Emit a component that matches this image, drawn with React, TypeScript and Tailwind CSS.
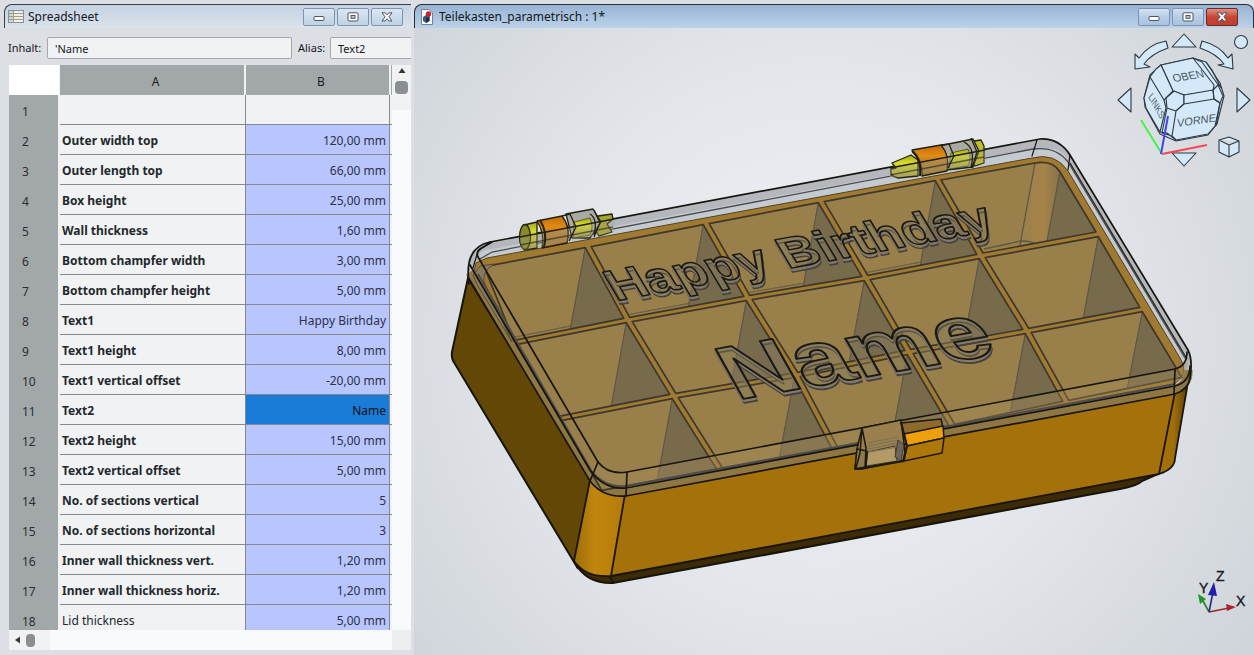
import React from "react";

type Row = { label: string; value: string; bold?: boolean; selected?: boolean };

const rows: Row[] = [
  { label: "", value: "" },
  { label: "Outer width top", value: "120,00 mm", bold: true },
  { label: "Outer length top", value: "66,00 mm", bold: true },
  { label: "Box height", value: "25,00 mm", bold: true },
  { label: "Wall thickness", value: "1,60 mm", bold: true },
  { label: "Bottom champfer width", value: "3,00 mm", bold: true },
  { label: "Bottom champfer height", value: "5,00 mm", bold: true },
  { label: "Text1", value: "Happy Birthday", bold: true },
  { label: "Text1 height", value: "8,00 mm", bold: true },
  { label: "Text1 vertical offset", value: "-20,00 mm", bold: true },
  { label: "Text2", value: "Name", bold: true, selected: true },
  { label: "Text2 height", value: "15,00 mm", bold: true },
  { label: "Text2 vertical offset", value: "5,00 mm", bold: true },
  { label: "No. of sections vertical", value: "5", bold: true },
  { label: "No. of sections horizontal", value: "3", bold: true },
  { label: "Inner wall thickness vert.", value: "1,20 mm", bold: true },
  { label: "Inner wall thickness horiz.", value: "1,20 mm", bold: true },
  { label: "Lid thickness", value: "5,00 mm" },
];

function WindowButtons({ active = false }: { active?: boolean }) {
  const base =
    "flex h-[18px] w-8 items-center justify-center rounded-xs border bg-linear-to-b";
  const tone = active
    ? "border-[#7f93b0] from-[#d3e1f1] via-[#b7cde6] to-[#a9c3e0]"
    : "border-[#7f93b0] from-[#dbe6f1] to-[#c0d2e5]";
  const closeTone = active
    ? "border-[#6b2a2a] from-[#dd8f84] via-[#c8452f] to-[#c2402c]"
    : tone;
  const ink = "#4a5565";
  return (
    <div className="flex gap-0.5">
      <button type="button" aria-label="Minimize" className={`${base} ${tone}`}>
        <svg width="12" height="10" viewBox="0 0 12 10">
          <rect x="1" y="4.5" width="10" height="4" rx="1" fill="#fff" stroke={ink} />
        </svg>
      </button>
      <button type="button" aria-label="Maximize" className={`${base} ${tone}`}>
        <svg width="12" height="10" viewBox="0 0 12 10">
          <rect x="1" y="0.8" width="10" height="8.2" rx="1" fill="#fff" stroke={ink} />
          <rect x="4" y="3.5" width="4" height="2.8" fill="#b9cbe0" stroke={ink} />
        </svg>
      </button>
      <button type="button" aria-label="Close" className={`${base} ${closeTone}`}>
        <svg width="12" height="10" viewBox="0 0 12 10">
          <path
            d="M1 0.8H4.2L6 2.9L7.8 0.8H11L7.9 4.8L11 9H7.8L6 6.8L4.2 9H1L4.1 4.8Z"
            fill="#fff"
            stroke={ink}
            strokeLinejoin="round"
          />
        </svg>
      </button>
    </div>
  );
}

function SheetIcon() {
  return (
    <svg width="16" height="13" viewBox="0 0 16 13">
      <rect x="0.5" y="0.5" width="15" height="12" fill="#eef0e6" stroke="#8b9299" />
      <rect x="1" y="1" width="4" height="11" fill="#d3d6cf" />
      <path d="M5.5 1V12M1 3.5H15M1 6.5H15M1 9.5H15" stroke="#9aa18f" />
    </svg>
  );
}

function DocumentIcon() {
  return (
    <svg width="12" height="16" viewBox="0 0 12 16">
      <path d="M0.5 0.5H8L11.5 4V15.5H0.5Z" fill="#fff" stroke="#76818f" />
      <path d="M2 8L5 6L8.5 7.5V12L5 14L2 12Z" fill="#3d5580" />
      <circle cx="7.5" cy="5" r="2.7" fill="#c32432" />
      <path d="M5 9L8.5 7.5V12L5 14Z" fill="#1f2f4e" />
    </svg>
  );
}

function SpreadsheetWindow() {
  return (
    <section className="flex w-[411px] flex-none flex-col overflow-hidden bg-[#dcdfe3]">
      <header className="mt-1 ml-1 flex h-6 flex-none items-center rounded-tl-lg border-t border-l border-[#3a4047] bg-linear-to-b from-[#c3d2e2] to-[#dbe3ec] pr-2 pl-[3px]">
        <SheetIcon />
        <h1 className="ml-1 flex-1 text-xs text-[#14181d]">Spreadsheet</h1>
        <WindowButtons />
      </header>
      <div className="flex h-10 flex-none items-center overflow-hidden pl-2 text-[11px] text-[#15181c]">
        <label htmlFor="content" className="w-[39px] flex-none">
          Inhalt:
        </label>
        <input
          id="content"
          defaultValue="'Name"
          className="h-[22px] w-[245px] flex-none rounded-xs border border-[#a5a9ad] bg-[#f0f2f4] px-[7px]"
        />
        <label htmlFor="alias" className="ml-[6px] w-[32px] flex-none">
          Alias:
        </label>
        <input
          id="alias"
          defaultValue="Text2"
          className="h-[22px] w-[120px] flex-none rounded-xs border border-[#a5a9ad] bg-[#f0f2f4] px-[7px]"
        />
      </div>
      <div className="mt-[-3px] mb-[5px] ml-[9px] flex min-h-0 flex-1 flex-col">
        <div className="flex min-h-0 flex-1">
          <div className="w-[383px] flex-none overflow-hidden bg-[#f0f2f4]">
            <table className="w-full table-fixed border-separate border-spacing-0 text-xs">
              <colgroup>
                <col className="w-[51px]" />
                <col className="w-[186px]" />
                <col className="w-[144px]" />
                <col />
              </colgroup>
              <thead>
                <tr className="h-[30px] text-[#1b1e21]">
                  <td className="border-r border-[#f0f2f4] bg-white" />
                  <th scope="col" className="border-r-2 border-[#f0f2f4] bg-[#a2a7aa] pt-1 pl-[7px] font-normal">
                    A
                  </th>
                  <th scope="col" className="border-r border-[#f0f2f4] bg-[#a2a7aa] pt-1 pl-[7px] font-normal">
                    B
                  </th>
                  <td className="border-r border-[#a2a7aa]" />
                </tr>
              </thead>
              <tbody>
                {rows.map((row, i) => (
                  <tr key={i} className="h-[30px] text-[#24282c]">
                    <th
                      scope="row"
                      className="border-r-2 border-[#f0f2f4] bg-[#a2a7aa] pt-1 pl-[13px] text-left font-normal text-[#2b2e31]"
                    >
                      {i + 1}
                    </th>
                    <td
                      className={`truncate border-r border-b border-[#85898f] pt-0.5 pl-[2px] ${row.bold ? "font-bold" : ""}`}
                    >
                      {row.label}
                    </td>
                    <td
                      className={`border-r border-b border-[#85898f] pt-0.5 pr-[3px] text-right ${
                        row.selected ? "bg-[#1b7cd8] text-[#0d1116]" : row.value ? "bg-[#b9c5fe] text-[#2c3146]" : ""
                      }`}
                    >
                      {row.value}
                    </td>
                    <td className="border-b border-[#85898f]" />
                  </tr>
                ))}
              </tbody>
            </table>
          </div>
          <div className="flex flex-1 flex-col bg-[#f9fafb]">
            <div className="flex h-[45px] flex-none flex-col items-center gap-2 bg-[#f0f2f4] pt-[3px]">
              <svg width="8" height="5" viewBox="0 0 8 5">
                <path d="M0.5 5L4 0L7.5 5Z" fill="#33373b" />
              </svg>
              <div className="h-[13px] w-[13px] rounded-sm bg-[#8a8f94]" />
            </div>
          </div>
        </div>
        <div className="flex h-5 flex-none bg-[#f9fafb]">
          <div className="flex w-[41px] items-center gap-[6px] bg-[#f0f2f4] pl-[6px]">
            <svg width="5" height="8" viewBox="0 0 5 8">
              <path d="M5 0.5L0 4L5 7.5Z" fill="#33373b" />
            </svg>
            <div className="h-[13px] w-[9px] rounded-sm bg-[#8a8f94]" />
          </div>
          <div className="flex-1" />
          <div className="w-[19px] bg-[#eceef0]" />
        </div>
      </div>
    </section>
  );
}

type Pt = [number, number];

/* Crossing points of the partition walls: four horizontal lines, six vertical ones. */
const grid: Pt[][] = [
  [[480, 265], [587, 245], [705, 222], [820, 200], [937, 178], [1056, 156]],
  [[512, 343], [628, 320], [748, 298], [866, 278], [981, 256], [1100, 234]],
  [[557, 419], [674, 396], [796, 375], [909, 352], [1027, 331], [1144, 309]],
  [[600, 493], [721, 471], [836, 450], [953, 427], [1067, 403], [1186, 379]],
];

const mix = (a: Pt, b: Pt, t: number): Pt => [a[0] + (b[0] - a[0]) * t, a[1] + (b[1] - a[1]) * t];
const path = (pts: Pt[]) => "M" + pts.map((p) => p.map((n) => n.toFixed(1)).join(" ")).join("L") + "Z";
const shift = (p: Pt, dx: number, dy: number): Pt => [p[0] + dx, p[1] + dy];

function Compartments() {
  const cells: React.ReactNode[] = [];
  for (let r = 0; r < 3; r++) {
    for (let c = 0; c < 5; c++) {
      const tl = shift(grid[r][c], 4.2, 1.6);
      const tr = shift(grid[r][c + 1], -1.7, 2.7);
      const br = shift(grid[r + 1][c + 1], -4.2, -1.6);
      const bl = shift(grid[r + 1][c], 1.7, -2.7);
      const foot = mix(bl, br, (tr[0] - 15 - bl[0]) / (br[0] - bl[0]));
      const corner = r === 0 && c === 4;
      cells.push(
        <g key={`${r}-${c}`} strokeLinejoin="round">
          {corner ? (
            <>
              <path d="M941 180L1035 163Q1053 160 1060 172L1096 232L983 253Z" fill="#99804b" />
              <path d="M1035 163Q1053 160 1060 172L1047 241L1020 245Z" fill="url(#column)" />
              <path d="M1060 172L1096 232L1047 241Z" fill="#776b4c" />
              <path
                d="M1035 163L1020 245M1060 172L1047 241M984 249L1012 243Q1024 239 1034 243"
                fill="none"
                stroke="#5d5748"
                strokeWidth="1.3"
              />
              <path
                d="M941 180L1035 163Q1053 160 1060 172L1096 232L983 253Z"
                fill="none"
                stroke="#3d372d"
                strokeWidth="1.7"
              />
            </>
          ) : (
            <>
              <path d={path([tl, tr, br, bl])} fill="#99804b" />
              <path d={path([tr, br, foot])} fill="#776b4c" />
              <path d={path([tr, foot])} fill="none" stroke="#5d5748" strokeWidth="0.9" />
              {r === 0 && (
                <path
                  d={path([shift(bl, 0, -3), shift(foot, 0, -3)])}
                  fill="none"
                  stroke="#6d6144"
                  strokeWidth="0.9"
                />
              )}
              <path d={path([tl, tr, br, bl])} fill="none" stroke="#3d372d" strokeWidth="1.7" />
            </>
          )}
        </g>,
      );
    }
  }
  return <>{cells}</>;
}

type RaisedTextProps = { text: string; matrix: string; depth: number; line: number };

function RaisedText({ text, matrix, depth, line }: RaisedTextProps) {
  return (
    <g fontFamily="'Liberation Sans', Arial, sans-serif" fontWeight="700" fontSize="100" strokeLinejoin="round">
      <g aria-hidden="true" transform={`translate(1 ${depth})`}>
        <text transform={matrix} fill="#77777a" fillOpacity="0.25" stroke="#45413a" strokeWidth={line}>
          {text}
        </text>
      </g>
      <g aria-hidden="true" transform={`translate(0 ${depth / 2})`}>
        <text transform={matrix} fill="none" stroke="#7d7b74" strokeWidth={line}>
          {text}
        </text>
      </g>
      <text transform={matrix} fill="#958050" fillOpacity="0.3" stroke="#1c1912" strokeWidth={line}>
        {text}
      </text>
    </g>
  );
}

function Hinges() {
  return (
    <g stroke="#22200f" strokeWidth="1.3" strokeLinejoin="round">
      {/* left hinge */}
      <path d="M598 216L612 214L613 219L607 224L612 232L599 236L592 225Z" fill="#a6a52d" />
      <path d="M566 214L593 209L601 222L590 238L572 238Z" fill="#a9aaa4" />
      <path d="M574 222L590 218Q594 227 590 235L573 238Z" fill="url(#yellow)" strokeWidth="0.6" />
      <path d="M524 225L537 222V248L524 250Z" fill="url(#yellow)" />
      <ellipse cx="525" cy="237" rx="5.5" ry="12.5" fill="#888b23" />
      <path d="M537 221L562 216Q571 227 567 243L542 248Q545 233 537 221Z" fill="url(#orange)" />
      {/* right hinge */}
      <path d="M974 141L981 140L984 146V163L975 166L968 154Z" fill="#bfbf25" />
      <path d="M939 146L973 139L979 151L973 167L946 170Z" fill="#a9aaa4" />
      <path d="M951 153L968 149Q972 158 968 166L949 169Z" fill="url(#yellow)" strokeWidth="0.6" />
      <path d="M892 163L911 155L918 160V176L898 178Q889 176 891 169L896 168Z" fill="url(#yellow)" />
      <path d="M912 150L941 145Q950 155 947 171L922 176Q923 160 912 150Z" fill="url(#orange)" />
      {/* lid glass in front of the lower half of both hinges */}
      <path d="M520 237L614 219V232L520 251ZM890 167L985 149V163L890 179Z" fill="#a9a68c" fillOpacity="0.3" stroke="none" />
      <g fill="none">
        <path d="M562 216L570 214L576 227L569 241M590 214Q598 219 594 235M594 210L600 223L594 237" />
        <path d="M520 237L614 219" />
        <path d="M540 220Q548 233 544 247" strokeWidth="2" />
        <path d="M941 145L949 144L954 156L948 168M964 142Q976 148 971 167M971 138L977 152L972 168" />
        <path d="M912 151Q922 160 920 176" strokeWidth="2" />
        <path d="M890 168L985 150" />
        <path d="M520 245L613 227M890 175L984 157" strokeOpacity="0.6" />
      </g>
    </g>
  );
}

function Latch() {
  return (
    <g stroke="#1c1a12" strokeWidth="1.5" strokeLinejoin="round">
      <path d="M862 428L901 420L906 460L862 469H855L857 449Z" fill="#9b804d" />
      <path d="M868 452L895 446L897 461L866 466Z" fill="#b39a66" strokeWidth="0.7" />
      <path d="M868 443L898 437M868 446L898 440M868 449L898 443M868 452L904 446" stroke="#77705c" strokeWidth="1" />
      <path d="M857 449L867 451L866 467L855 469Z" fill="#8f7a4e" />
      <path d="M862 428L866 448L865 467M862 428L860 453L856 468" fill="none" />
      <path d="M898 440L904 445L901 461L895 457Z" fill="#6b675b" strokeWidth="0.6" />
      <path d="M901 423L941 419L943 428L904 434Z" fill="#8d6a2e" />
      <path d="M904 434L943 426L944 438L907 446Z" fill="#eda00a" />
      <path d="M907 446L944 438L942 453L904 461Z" fill="#ad7809" />
      <path d="M901 422L907 446L903 461M857 469L904 461" fill="none" strokeWidth="2" />
    </g>
  );
}

function Box() {
  return (
    <g>
      {/* outer walls */}
      <path d="M468 278L452 352Q451 359 455 364L577 567L592 480Z" fill="#624707" stroke="#17140b" strokeWidth="2" />
      <path d="M575 563Q587 584 613 583L1120 489Q1137 486 1142 481L1160 473L611 576Z" fill="#3c2b06" stroke="#17140b" strokeWidth="2" />
      <path d="M609 576L614 583" stroke="#17140b" strokeWidth="1.5" />
      <path d="M590 480L574 561Q586 578 611 576L626 494Z" fill="url(#cornerFront)" />
      <path d="M625 494L1176 392L1159 474L611 576Z" fill="#a5710a" />
      <path d="M1175 392L1188 380L1175 458Q1175 469 1159 474Z" fill="url(#cornerRight)" />
      <path
        d="M590 480L574 561Q586 578 611 576L1159 474Q1175 469 1175 458L1188 382M625 494L611 576M1175 392L1159 474"
        fill="none"
        stroke="#1a160c"
        strokeWidth="1.8"
      />

      {/* translucent back and side of the lid */}
      <path d="M468 275Q464 247 490 242L1040 139Q1059 138 1070 155L1188 350Q1194 362 1188 372L1173 380L625 484Q602 485 592 472Z" fill="#b4b7bc" />
      <path d="M478 256Q480 250 492 249L1035 148Q1060 145 1068 160L1185 360L1174 369L1030 180L500 270Z" fill="#c4cad1" />

      {/* rim */}
      <path d="M476 263L487 258L1032 158Q1055 152 1068 171L1180 358Q1190 375 1173 385L625 488Q608 489 598 478L473 275Z" fill="#9f7a30" stroke="#54431d" strokeWidth="1" />
      <path d="M470 272L591 475Q604 494 626 491L1175 390Q1189 384 1188 370" fill="none" stroke="#8f7743" strokeWidth="9" />
      <Compartments />
      <path d="M480 266L473 275L478 286L512 342L484 282Q482 271 494 264Z" fill="#887b5d" stroke="#554c38" strokeWidth="1" />

      {/* lighter band seen through the front edge of the lid */}
      <path d="M598 462Q608 475 627 472L1175 369L1188 362L1185 375L1175 385L626 488Q604 488 590 472Z" fill="#a8905b" fillOpacity="0.35" />

      {/* lid edges */}
      <g fill="none" stroke="#4d4b48" strokeWidth="1.3">
        <path d="M480 259L492 252L1033 149Q1056 146 1068 162L1185 358" />
        <path d="M1070 163L1187 359" stroke="#24221e" />
        <path d="M478 274L592 472Q606 488 626 486L1175 384" stroke="#4f4e4e" strokeWidth="2" />
      </g>
      <g fill="none" stroke="#17150f" strokeWidth="1.7" strokeLinecap="round">
        <path d="M469 284Q464 247 490 242L1040 139Q1059 138 1070 155L1188 350Q1193 360 1190 378" />
        <path d="M598 462Q608 475 627 472L1175 369Q1187 366 1187 352" />
        <path d="M598 462L478 257Q476 252 480 249L492 242" />
        <path d="M470 265L590 470Q604 490 626 488L1175 386Q1190 382 1190 366" />
        <path d="M468 277L590 481Q603 498 626 496L1175 394Q1188 390 1190 378" />
        <path d="M598 462L590 481M627 472L626 496M1175 369L1174 394" />
        <path d="M1037 140L1032 156M490 242L478 251L473 268M1070 155L1068 170" strokeWidth="1.2" />
      </g>
      <Hinges />
      <RaisedText text="Happy Birthday" matrix="matrix(.517 -.097 .245 .41 616 301)" depth={4} line={3.4} />
      <RaisedText text="Name" matrix="matrix(.965 -.172 .405 .725 737 400)" depth={4} line={2.4} />
      <Latch />
    </g>
  );
}

function NavigationCube() {
  return (
    <g fill="#d3e8f8" stroke="#2d3942" strokeWidth="1.1" strokeLinejoin="round">
      <path d="M1184 34L1196 47H1172Z" />
      <path d="M1184 166L1196 153H1172Z" />
      <path d="M1118 100L1131 88V112Z" />
      <path d="M1250 100L1237 88V112Z" />
      <circle cx="1241" cy="42" r="6.5" />
      <path d="M1166 41L1168 48Q1151 54 1144 64L1150 67L1135 69L1135 54L1139 58Q1149 44 1166 41Z" />
      <path d="M1202 41L1200 48Q1217 54 1224 64L1218 65L1233 69L1232 54L1228 58Q1219 45 1202 41Z" />
      <path d="M1161 65L1193 58L1206 62L1220 83L1224 96L1217 124L1208 135L1176 141L1160 134L1145 107L1144 98L1150 75Z" />
      <path d="M1161 65L1193 58L1214 85L1213 91L1184 95L1173 91Z" />
      <path d="M1161 65L1156 69L1150 77L1164 100L1173 91ZM1150 77L1144 98L1146 108L1160 132L1166 108L1164 100Z" />
      <path d="M1166 98L1174 91L1184 95V104L1176 111L1167 108Z" />
      <path d="M1184 95L1213 90L1214 99L1184 104ZM1176 111L1184 104L1214 99L1220 103L1215 126L1208 134L1176 140L1172 136Z" />
      <path
        d="M1214 99L1213 90L1218 85L1223 96L1220 103ZM1206 62L1212 70L1221 88M1193 58L1202 62L1219 86M1220 103L1216 126M1160 132L1167 133L1176 140M1167 108L1162 133L1172 136"
        fill="none"
      />
      <g fill="#4b5862" stroke="none" fontFamily="'Liberation Sans', Arial, sans-serif">
        <text transform="translate(1174 82) rotate(-9) skewX(10)" fontSize="11">
          OBEN
        </text>
        <text transform="translate(1177 127) rotate(-8) skewX(-10)" fontSize="11">
          VORNE
        </text>
        <text transform="translate(1148 97) rotate(61) skewX(18)" fontSize="9">
          LINKS
        </text>
      </g>
      <path d="M1219 140L1229 137L1239 141V152L1229 157L1219 152ZM1219 140L1229 145L1239 141M1229 145V157" />
      <g fill="none" strokeWidth="2">
        <path d="M1162 154L1207 145" stroke="#f34a4f" />
        <path d="M1162 154L1141 120" stroke="#43f349" />
        <path d="M1161 154L1168 116" stroke="#4544ee" />
      </g>
    </g>
  );
}

function AxisCross() {
  return (
    <g>
      <g strokeWidth="1.6">
        <path d="M1209 612L1229 608" stroke="#982a30" />
        <path d="M1209 612L1202 599" stroke="#23802a" />
        <path d="M1209 612L1213 592" stroke="#25258e" />
      </g>
      <path d="M1226 604L1236 607L1227 611Z" fill="#b0252b" />
      <path d="M1198 594L1206 599L1200 604Z" fill="#1f9628" />
      <path d="M1214 582L1217 596L1208 595Z" fill="#2020a8" />
      <g
        fill="#16191d"
        stroke="#16191d"
        strokeWidth="0.4"
        fontFamily="'Liberation Sans', Arial, sans-serif"
        fontSize="14"
      >
        <text x="1199" y="593">
          Y
        </text>
        <text x="1216" y="581">
          Z
        </text>
        <text x="1236" y="606">
          X
        </text>
      </g>
    </g>
  );
}

function ModelWindow() {
  return (
    <section className="flex min-w-0 flex-1 flex-col bg-[#dcdfe3] pl-[3px]">
      <header className="mt-1 flex h-6 flex-none items-center rounded-t-lg border-x border-t border-[#23303e] bg-linear-to-b from-[#98b4d3] to-[#bcd2ea] pr-[15px] pl-[6px]">
        <DocumentIcon />
        <h2 className="ml-[6px] flex-1 truncate text-xs text-[#101820]">Teilekasten_parametrisch : 1*</h2>
        <WindowButtons active />
      </header>
      <div className="min-h-0 flex-1">
        <svg
          role="img"
          aria-label="3D view of the parts box"
          className="block h-full w-full"
          viewBox="414 28 840 627"
          preserveAspectRatio="xMidYMid slice"
        >
          <defs>
            <radialGradient id="backdrop" gradientUnits="userSpaceOnUse" cx="820" cy="340" r="540">
              <stop offset="0" stopColor="#f0f2f5" />
              <stop offset="0.5" stopColor="#e3e6ea" />
              <stop offset="1" stopColor="#cfd4da" />
            </radialGradient>
            <linearGradient id="yellow" x1="0" y1="0" x2="0" y2="1">
              <stop offset="0" stopColor="#a4a81a" />
              <stop offset="0.35" stopColor="#d9dd28" />
              <stop offset="1" stopColor="#a5a04c" />
            </linearGradient>
            <linearGradient id="orange" x1="0" y1="0" x2="0" y2="1">
              <stop offset="0" stopColor="#c36c08" />
              <stop offset="0.35" stopColor="#e18c15" />
              <stop offset="0.55" stopColor="#b47d2f" />
              <stop offset="1" stopColor="#9c793b" />
            </linearGradient>
            <linearGradient id="column">
              <stop offset="0" stopColor="#99804b" />
              <stop offset="0.6" stopColor="#a68348" />
              <stop offset="1" stopColor="#88724a" />
            </linearGradient>
            <linearGradient id="cornerFront">
              <stop offset="0" stopColor="#9b6d0b" />
              <stop offset="0.4" stopColor="#c1860d" />
              <stop offset="1" stopColor="#b47a0b" />
            </linearGradient>
            <linearGradient id="cornerRight">
              <stop offset="0" stopColor="#a7720a" />
              <stop offset="0.5" stopColor="#a06e0a" />
              <stop offset="1" stopColor="#5c4007" />
            </linearGradient>
          </defs>
          <rect x="0" y="0" width="1700" height="1000" fill="url(#backdrop)" />
          <Box />
          <NavigationCube />
          <AxisCross />
        </svg>
      </div>
    </section>
  );
}

export default function App() {
  return (
    <main className="flex h-screen overflow-hidden bg-[#dcdfe3] font-['Noto_Sans','Open_Sans',sans-serif]">
      <SpreadsheetWindow />
      <ModelWindow />
    </main>
  );
}
